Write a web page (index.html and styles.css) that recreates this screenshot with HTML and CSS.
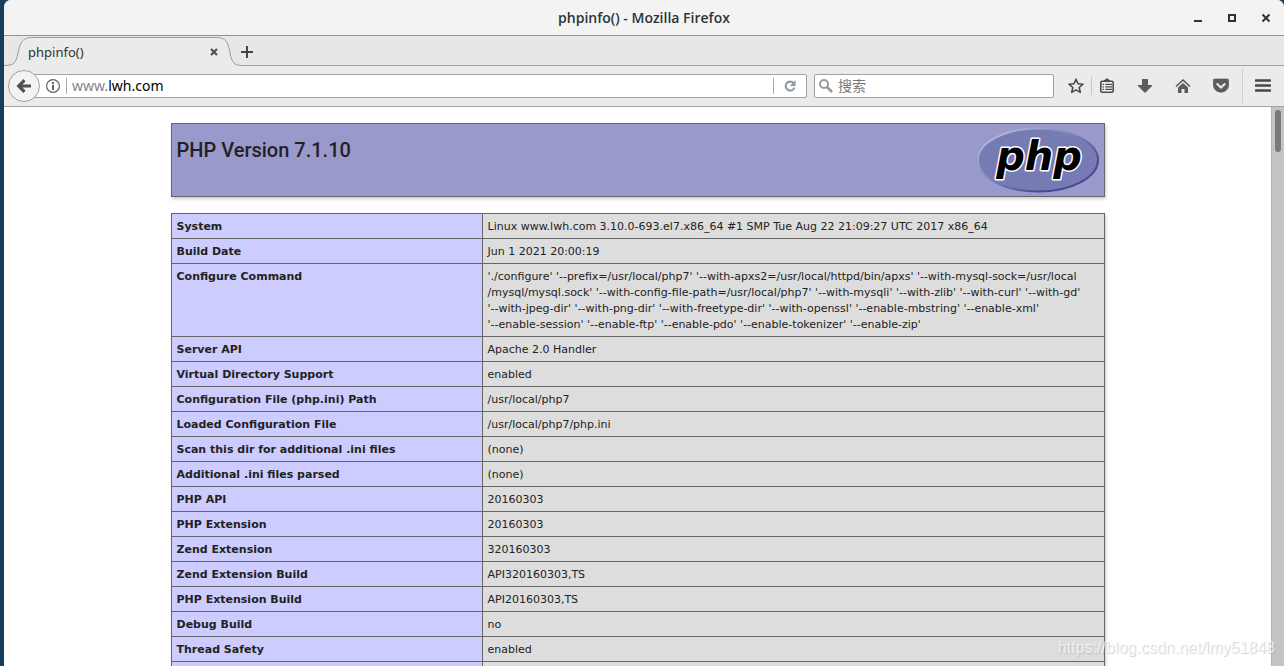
FILE: index.html
```html
<!DOCTYPE html>
<html lang="en">
<head>
<meta charset="utf-8">
<title>phpinfo()</title>
<link rel="stylesheet" href="styles.css">
</head>
<body>
<div class="window">
  <header class="titlebar">
    <span class="window-title">phpinfo() - Mozilla Firefox</span>
    <div class="window-controls">
      <button aria-label="Minimize"><svg width="10" height="10" viewBox="0 0 10 10"><path d="M1 8h8" stroke="#2e3436" stroke-width="2"/></svg></button>
      <button aria-label="Maximize"><svg width="10" height="10" viewBox="0 0 10 10"><path d="M2 2h6v6H2z" fill="none" stroke="#2e3436" stroke-width="2"/></svg></button>
      <button aria-label="Close"><svg width="10" height="10" viewBox="0 0 10 10"><path d="M1.500 1.500l7 7M8.500 1.500l-7 7" stroke="#2e3436" stroke-width="2"/></svg></button>
    </div>
  </header>
  <div class="tabstrip">
    <div class="tab">
      <svg class="tab-shape" width="239" height="30" viewBox="0 0 239 30"><path d="M0 29.500C10 29.500 12 27 14 17C16 6 19 1.500 28 1.500H212C222 1.500 224 6 226 17C228 27 230 29.500 239 29.500V30H0Z" fill="#ebebe9"/><path d="M0 29.500C10 29.500 12 27 14 17C16 6 19 1.500 28 1.500H212C222 1.500 224 6 226 17C228 27 230 29.500 239 29.500" fill="none" stroke="#989da3"/></svg>
      <span class="tab-label">phpinfo()</span>
      <button class="tab-close" aria-label="Close tab"><svg width="8" height="8" viewBox="0 0 8 8"><path d="M1 1l6 6M7 1l-6 6" stroke="#4c5356" stroke-width="2.200"/></svg></button>
    </div>
    <button class="new-tab" aria-label="New tab"><svg width="12" height="12" viewBox="0 0 12 12"><path d="M6 0v12M0 6h12" stroke="#454545" stroke-width="2"/></svg></button>
  </div>
  <nav class="toolbar">
    <button class="back" aria-label="Back"><svg width="16" height="16" viewBox="0 0 16 16"><path d="M8.500 2.200L2.700 8l5.800 5.800M3 8h12" fill="none" stroke="#505050" stroke-width="3.200"/></svg></button>
    <div class="urlbar">
      <svg class="info" width="16" height="16" viewBox="0 0 16 16"><circle cx="8" cy="8" r="6.400" fill="none" stroke="#606060" stroke-width="1.200"/><path d="M8 4v2M8 7v5" stroke="#505050" stroke-width="1.800"/></svg>
      <a class="address" href="#"><span class="muted">www.</span>lwh.com</a>
      <button class="reload" aria-label="Reload"><svg width="14" height="14" viewBox="0 0 14 14"><path d="M11.500 8.500A4.500 4.500 0 1 1 10.500 4" fill="none" stroke="#8c9cac" stroke-width="2.200"/><path d="M12.500 1v6H6.700Z" fill="#8c9cac"/></svg></button>
    </div>
    <label class="search">
      <svg width="14" height="14" viewBox="0 0 14 14"><circle cx="5" cy="5" r="4" fill="none" stroke="#999" stroke-width="2"/><path d="M8 8l5 5" stroke="#999" stroke-width="2.600"/></svg>
      <input type="text" placeholder="搜索" aria-label="搜索">
    </label>
    <div class="tools">
      <button class="tool" aria-label="Bookmark this page"><svg width="16" height="16" viewBox="0 0 16 16"><path d="M8 1.200l2 4.500 5 .5-3.800 3.300 1.100 4.900L8 11.900l-4.300 2.500 1.100-4.900L1 6.200l5-.5Z" fill="none" stroke="#4a4a4a" stroke-width="1.600" stroke-linejoin="round"/></svg></button>
      <span class="tool-line"></span>
      <button class="tool" aria-label="Bookmarks"><svg width="16" height="16" viewBox="0 0 16 16"><rect x="1.800" y="3.300" width="12.400" height="11" rx="1.500" fill="#f0f0ef" stroke="#4a4a4a" stroke-width="1.600"/><path d="M5 2.800L8 .8l3 2Z" fill="#4a4a4a" stroke="#4a4a4a"/><path d="M3.500 6.300H5M3.500 8.800H5M3.500 11.300H5M6.300 6.300H13M6.300 8.800H13M6.300 11.300H13" stroke="#4a4a4a" stroke-width="1.300"/></svg></button>
      <button class="tool" aria-label="Downloads"><svg width="16" height="16" viewBox="0 0 16 16"><path d="M5.500 1.500h5v6H15L8 14.500 1 7.500h4.500Z" fill="#5c5c5c" stroke="#484848" stroke-width=".8"/></svg></button>
      <button class="tool" aria-label="Home"><svg width="16" height="16" viewBox="0 0 16 16"><path d="M1 8.500L8 2l7 6.500" fill="none" stroke="#555" stroke-width="1.600"/><path d="M3 9.500l5-4.500 5 4.500V15H9.500v-4h-3v4H3Z" fill="#5c5c5c"/></svg></button>
      <button class="tool" aria-label="Pocket"><svg width="16" height="16" viewBox="0 0 16 16"><path d="M1.500 1h13q1 0 1 1v5c0 9.500-15 9.500-15 0V2q0-1 1-1Z" fill="#5c5c5c" stroke="#4a4a4a" stroke-width=".6"/><path d="M4.300 6L8 9.500 11.700 6" fill="none" stroke="#eee" stroke-width="2" stroke-linecap="round"/></svg></button>
      <span class="menu-line"></span>
      <button class="tool" aria-label="Menu"><svg width="16" height="16" viewBox="0 0 16 16"><path d="M1 2.500h14M1 7.500h14M1 12.500h14" stroke="#484848" stroke-width="2.600" stroke-linecap="round"/></svg></button>
    </div>
  </nav>
  <div class="viewport">
    <main class="page">
      <section class="banner">
        <h1>PHP Version 7.1.10</h1>
        <svg class="logo" width="122" height="66" viewBox="0 0 122 66" role="img" aria-label="PHP logo">
          <defs><linearGradient id="rim" x1="0" y1="0" x2="1" y2="1"><stop offset=".15" stop-color="#aeb2d5"/><stop offset=".5" stop-color="#777bb3"/><stop offset=".75" stop-color="#484893"/></linearGradient></defs>
          <ellipse cx="61" cy="33" rx="60" ry="31.500" fill="#777bb3" stroke="url(#rim)" stroke-width="2"/>
          <text class="logo-text" x="62" y="43" text-anchor="middle">php</text>
        </svg>
      </section>
      <table class="info-table">
        <tbody>
          <tr><th scope="row">System</th><td>Linux www.lwh.com 3.10.0-693.el7.x86_64 #1 SMP Tue Aug 22 21:09:27 UTC 2017 x86_64</td></tr>
          <tr><th scope="row">Build Date</th><td>Jun 1 2021 20:00:19</td></tr>
          <tr><th scope="row">Configure Command</th><td>'./configure' '--prefix=/usr/local/php7' '--with-apxs2=/usr/local/httpd/bin/apxs' '--with-mysql-sock=/usr/local<br>/mysql/mysql.sock' '--with-config-file-path=/usr/local/php7' '--with-mysqli' '--with-zlib' '--with-curl' '--with-gd'<br>'--with-jpeg-dir' '--with-png-dir' '--with-freetype-dir' '--with-openssl' '--enable-mbstring' '--enable-xml'<br>'--enable-session' '--enable-ftp' '--enable-pdo' '--enable-tokenizer' '--enable-zip'</td></tr>
          <tr><th scope="row">Server API</th><td>Apache 2.0 Handler</td></tr>
          <tr><th scope="row">Virtual Directory Support</th><td>enabled</td></tr>
          <tr><th scope="row">Configuration File (php.ini) Path</th><td>/usr/local/php7</td></tr>
          <tr><th scope="row">Loaded Configuration File</th><td>/usr/local/php7/php.ini</td></tr>
          <tr><th scope="row">Scan this dir for additional .ini files</th><td>(none)</td></tr>
          <tr><th scope="row">Additional .ini files parsed</th><td>(none)</td></tr>
          <tr><th scope="row">PHP API</th><td>20160303</td></tr>
          <tr><th scope="row">PHP Extension</th><td>20160303</td></tr>
          <tr><th scope="row">Zend Extension</th><td>320160303</td></tr>
          <tr><th scope="row">Zend Extension Build</th><td>API320160303,TS</td></tr>
          <tr><th scope="row">PHP Extension Build</th><td>API20160303,TS</td></tr>
          <tr><th scope="row">Debug Build</th><td>no</td></tr>
          <tr><th scope="row">Thread Safety</th><td>enabled</td></tr>
          <tr><th></th><td></td></tr>
        </tbody>
      </table>
    </main>
    <div class="scrollbar"><div class="thumb"></div></div>
  </div>
</div>
<div class="watermark">https://blog.csdn.net/lmy51848</div>
</body>
</html>
```
FILE: styles.css
```css
* { box-sizing: border-box; }
body {
  margin: 0;
  height: 100vh;
  padding-left: 4px;
  overflow: hidden;
  background: #173d5c;
  font-family: "Noto Sans", "Noto Sans CJK SC", sans-serif;
  font-size: 13px;
  color: #2e3436;
}
button {
  display: flex;
  align-items: center;
  justify-content: center;
  padding: 0;
  border: 0;
  background: none;
}
svg { display: block; flex: none; }
.window {
  height: 100%;
  display: flex;
  flex-direction: column;
  border-radius: 7px 7px 0 0;
  overflow: hidden;
  background: #fff;
}
.titlebar {
  flex: none;
  height: 36px;
  display: grid;
  grid-template-columns: 1fr auto 1fr;
  align-items: center;
  background: #f3f3f3;
  border-bottom: 1px solid #92938d;
}
.window-title { grid-column: 2; font: 600 14px/20px "Open Sans", sans-serif; }
.window-controls { display: flex; justify-content: flex-end; gap: 24px; padding-right: 13px; }
.tabstrip {
  flex: none;
  height: 30px;
  display: flex;
  background: #e7e7e5;
  border-bottom: 1px solid #a0a0a0;
}
.tab {
  position: relative;
  width: 239px;
  height: 30px;
  display: flex;
  align-items: center;
  justify-content: space-between;
  padding: 2px 25px 0 24px;
}
.tab-shape { position: absolute; left: 0; top: 0; }
.tab-label, .tab-close { position: relative; }
.new-tab { width: 12px; margin: 3px 0 0 -2px; }
.toolbar {
  flex: none;
  height: 41px;
  display: flex;
  align-items: center;
  padding: 0 13px 0 4px;
  background: #ebebe9;
  border-bottom: 1px solid #a3a3a3;
}
.back {
  position: relative;
  width: 32px;
  height: 32px;
  border: 1px solid #a2a2a0;
  border-radius: 50%;
  background: #f3f3f2;
}
.urlbar {
  flex: 1;
  height: 24px;
  margin-left: -8px;
  padding-left: 12px;
  display: flex;
  align-items: center;
  border: 1px solid #a2a2a0;
  border-radius: 2px;
  background: #fff;
}
.address {
  flex: 1;
  margin-left: 5px;
  padding-left: 5px;
  font-size: 14px;
  line-height: 16px;
  border-left: 1px solid #aaa;
  color: #000;
  text-decoration: none;
}
.muted { color: #858585; }
.reload { width: 33px; height: 16px; border-left: 1px solid #aaa; }
.search {
  width: 240px;
  height: 24px;
  margin-left: 7px;
  padding-left: 4px;
  display: flex;
  align-items: center;
  gap: 5px;
  border: 1px solid #a2a2a0;
  border-radius: 2px;
  background: #fff;
}
.search input {
  flex: 1;
  min-width: 0;
  height: 20px;
  padding: 0 0 2px;
  border: 0;
  outline: 0;
  background: none;
  font-family: "Noto Sans CJK SC", sans-serif;
  font-size: 14px;
}
.search input::placeholder { color: #777; }
.tools { display: flex; align-items: center; gap: 22px; margin-left: 14px; }
.tool-line { width: 1px; height: 18px; margin: 0 -15px; background: #c6c6c4; }
.menu-line { width: 1px; height: 34px; margin: 0 -10px 0 -9px; background: #cfcfcd; }
.viewport { flex: 1; min-height: 0; display: flex; }
.page { flex: 1; overflow: hidden; padding: 16px 16px 0; }
.banner {
  max-width: 934px;
  height: 74px;
  margin: 0 auto 16px;
  padding: 3px 5px;
  display: flex;
  justify-content: space-between;
  border: 1px solid #666;
  background: #99c;
  box-shadow: 1px 2px 3px #ccc;
}
h1 { margin: 11px 0 0; font: 500 20px/24px Roboto, sans-serif; color: #222; }
.logo { overflow: visible; }
.logo-text {
  font: italic 700 40px "DejaVu Sans", sans-serif;
  fill: #000;
  stroke: #fff;
  stroke-width: 3px;
  stroke-linejoin: round;
  paint-order: stroke;
}
.info-table {
  width: 100%;
  max-width: 934px;
  margin: 0 auto;
  table-layout: fixed;
  border-collapse: collapse;
  box-shadow: 1px 2px 3px #ccc;
  font: 11px/16px "DejaVu Sans", sans-serif;
  color: #222;
}
.info-table th, .info-table td {
  height: 25px;
  padding: 5px 5px 3px;
  border: 1px solid #666;
  text-align: left;
  vertical-align: top;
}
.info-table th { width: 311px; background: #ccf; font-weight: 700; }
.info-table td { background: #ddd; white-space: nowrap; }
.scrollbar { width: 13px; padding: 3px 3px 0; background: #c3c5c4; border-left: 1px solid #b4b6b5; }
.thumb { width: 6px; height: 42px; border-radius: 3px; background: #777c7b; }
.watermark {
  position: absolute;
  right: 9px;
  bottom: 8px;
  font: 16px/20px "Liberation Sans", sans-serif;
  color: rgba(255, 255, 255, .7);
  text-shadow: 1px 1px 1px rgba(140, 140, 140, .4);
}
```
